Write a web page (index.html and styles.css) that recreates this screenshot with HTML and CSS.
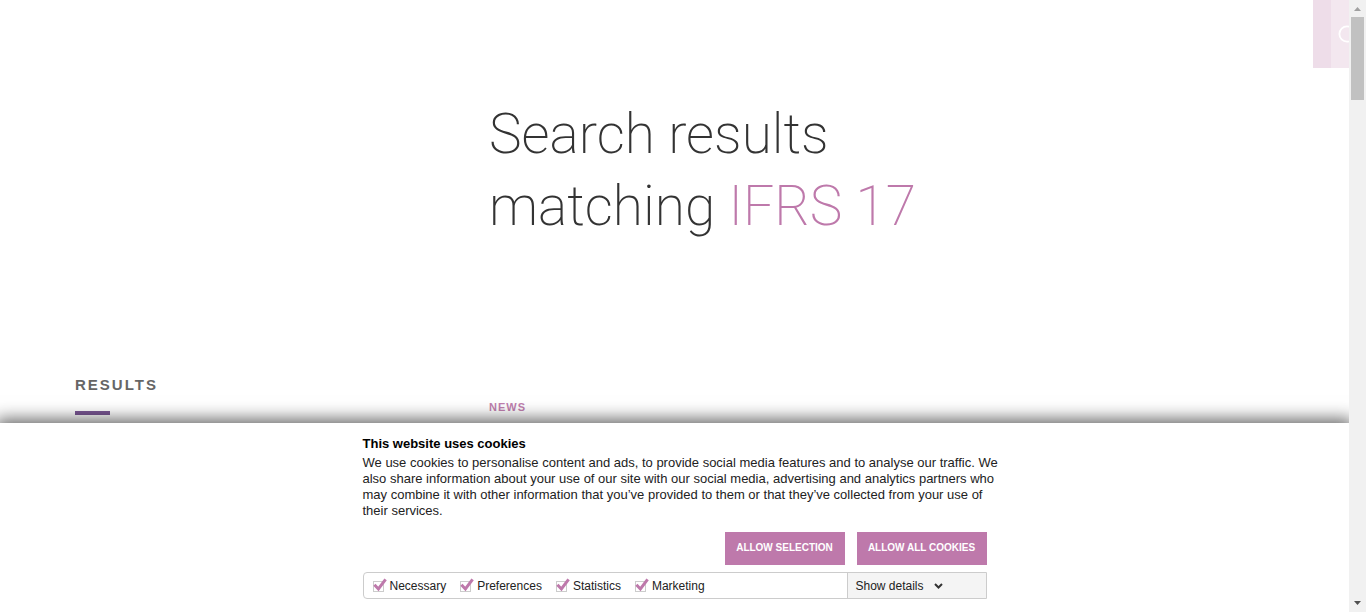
FILE: index.html
```
<!DOCTYPE html>
<html lang="en">
<head>
<meta charset="utf-8">
<meta name="viewport" content="width=device-width, initial-scale=1">
<title>Search results</title>
<link rel="stylesheet" href="styles.css">
</head>
<body>
<div class="page">
  <main class="content">
    <h1 class="headline">Search results<br>matching <span class="term">IFRS 17</span></h1>
    <h2 class="results-title">Results</h2>
    <a class="category" href="#">News</a>
  </main>
  <button class="search-toggle" type="button" aria-label="Search">
    <svg class="search-icon" viewBox="0 0 24 24" width="24" height="24" aria-hidden="true"><circle cx="9" cy="9" r="7.6" fill="none" stroke="#fff" stroke-width="1.8"/><path d="M14.5 14.5L22 22" stroke="#fff" stroke-width="1.8"/></svg>
  </button>
  <section class="cookies" aria-labelledby="cookies-title">
    <div class="cookies-body">
      <h2 class="cookies-title" id="cookies-title">This website uses cookies</h2>
      <p class="cookies-text">We use cookies to personalise content and ads, to provide social media features and to analyse our traffic. We also share information about your use of our site with our social media, advertising and analytics partners who may combine it with other information that you’ve provided to them or that they’ve collected from your use of their services.</p>
      <div class="actions">
        <button class="allow" type="button">Allow selection</button>
        <button class="allow" type="button">Allow all cookies</button>
      </div>
      <div class="options">
        <div class="choices">
          <label class="choice"><span class="tick"><input class="box" type="checkbox" checked><svg class="mark" viewBox="0 0 14 14" aria-hidden="true"><path d="M1.4 6.8L5.4 11L12.6 1.4"/></svg></span>Necessary</label>
          <label class="choice"><span class="tick"><input class="box" type="checkbox" checked><svg class="mark" viewBox="0 0 14 14" aria-hidden="true"><path d="M1.4 6.8L5.4 11L12.6 1.4"/></svg></span>Preferences</label>
          <label class="choice"><span class="tick"><input class="box" type="checkbox" checked><svg class="mark" viewBox="0 0 14 14" aria-hidden="true"><path d="M1.4 6.8L5.4 11L12.6 1.4"/></svg></span>Statistics</label>
          <label class="choice"><span class="tick"><input class="box" type="checkbox" checked><svg class="mark" viewBox="0 0 14 14" aria-hidden="true"><path d="M1.4 6.8L5.4 11L12.6 1.4"/></svg></span>Marketing</label>
        </div>
        <button class="details" type="button">Show details
          <svg viewBox="0 0 9 6" width="9" height="6" aria-hidden="true"><path d="M1 1L4.5 4.5L8 1" fill="none" stroke="#333" stroke-width="2"/></svg>
        </button>
      </div>
    </div>
  </section>
</div>
<div class="scrollbar" aria-hidden="true">
  <svg class="arrow" viewBox="0 0 17 17"><path d="M5 11L8.5 7L12 11Z" fill="#a0a0a0"/></svg>
  <div class="track"><div class="thumb"></div></div>
  <svg class="arrow" viewBox="0 0 17 17"><path d="M5 6L8.5 10L12 6Z" fill="#505050"/></svg>
</div>
</body>
</html>
```
FILE: styles.css
```
* { box-sizing: border-box; }

body {
  display: flex;
  height: 100vh;
  margin: 0;
  background: #fff;
  font-family: "Liberation Sans", Arial, sans-serif;
}

.page {
  position: relative;
  flex: 1;
  overflow: hidden;
}

.content {
  display: grid;
  grid-template-columns: 414px 1fr;
  padding: 98px 75px 0;
}

.headline {
  grid-column: 2;
  margin: 0 0 134px;
  color: #333;
  font-family: Roboto, sans-serif;
  font-size: 55px;
  font-weight: 200;
  line-height: 72px;
}

.term { color: #be79ab; }

.results-title {
  margin: 0;
  color: #666;
  font-size: 15px;
  font-weight: 700;
  letter-spacing: 2px;
  line-height: 18px;
  text-transform: uppercase;
}

.results-title::after {
  content: "";
  display: block;
  width: 35px;
  height: 4px;
  margin-top: 17px;
  background: #7b5795;
}

.category {
  margin-top: 23px;
  color: #c07fae;
  font-size: 11px;
  font-weight: 700;
  letter-spacing: 1px;
  line-height: 16px;
  text-decoration: none;
  text-transform: uppercase;
}

.search-toggle {
  position: absolute;
  top: 0;
  right: -32px;
  width: 68px;
  height: 68px;
  padding: 0;
  border: 0;
  border-left: 18px solid #eedde9;
  background: #f3e7ef;
}

.search-icon {
  position: absolute;
  top: 25px;
  left: 7px;
}

.cookies {
  position: absolute;
  right: 0;
  bottom: 0;
  left: 0;
  background: #fff;
  box-shadow: 0 0 16px 4px rgba(0, 0, 0, 0.6);
}

.cookies-body {
  max-width: 624px;
  margin: 0 auto;
  padding: 12px 0 13px;
  color: #222;
  font-size: 12px;
}

.cookies-title {
  margin: 0 0 2px;
  color: #000;
  font-size: 13px;
  line-height: 18px;
}

.cookies-text {
  margin: 0 -16px 13px 0;
  font-size: 13px;
  line-height: 16px;
}

.actions {
  display: grid;
  grid-template-columns: 120px 130px;
  justify-content: end;
  gap: 12px;
  margin-bottom: 7px;
}

.allow {
  height: 33px;
  padding: 0 0 2px;
  border: 0;
  background: #be79ab;
  color: #fff;
  font: 700 10px "Liberation Sans", Arial, sans-serif;
  text-transform: uppercase;
}

.options {
  display: flex;
  height: 27px;
  border: 1px solid #ccc;
  border-radius: 4px 0 0 4px;
}

.choices {
  display: flex;
  flex: 1;
  align-items: center;
  gap: 14px;
  padding-left: 9px;
}

.choice {
  display: flex;
  align-items: center;
  gap: 3px;
}

.tick {
  position: relative;
  display: flex;
  padding: 2px 3px 0 0;
}

.box {
  width: 11px;
  height: 11px;
  margin: 0;
  appearance: none;
  border: 1px solid #ccc;
  background: #fff;
}

.mark {
  position: absolute;
  top: -1px;
  left: 0;
  width: 14px;
  height: 14px;
  fill: none;
  pointer-events: none;
  stroke: #be79ab;
  stroke-width: 3;
}

.details {
  display: flex;
  align-items: center;
  gap: 10px;
  width: 139px;
  padding: 0 8px;
  border: 0;
  border-left: 1px solid #ccc;
  background: #f4f4f4;
  color: #222;
  font: 12px "Liberation Sans", Arial, sans-serif;
}

.scrollbar {
  display: flex;
  flex-direction: column;
  width: 17px;
  background: #f1f1f1;
}

.arrow {
  width: 17px;
  height: 17px;
}

.track { flex: 1; }

.thumb {
  width: 13px;
  height: 83px;
  margin: 0 auto;
  background: #c1c1c1;
}
```
